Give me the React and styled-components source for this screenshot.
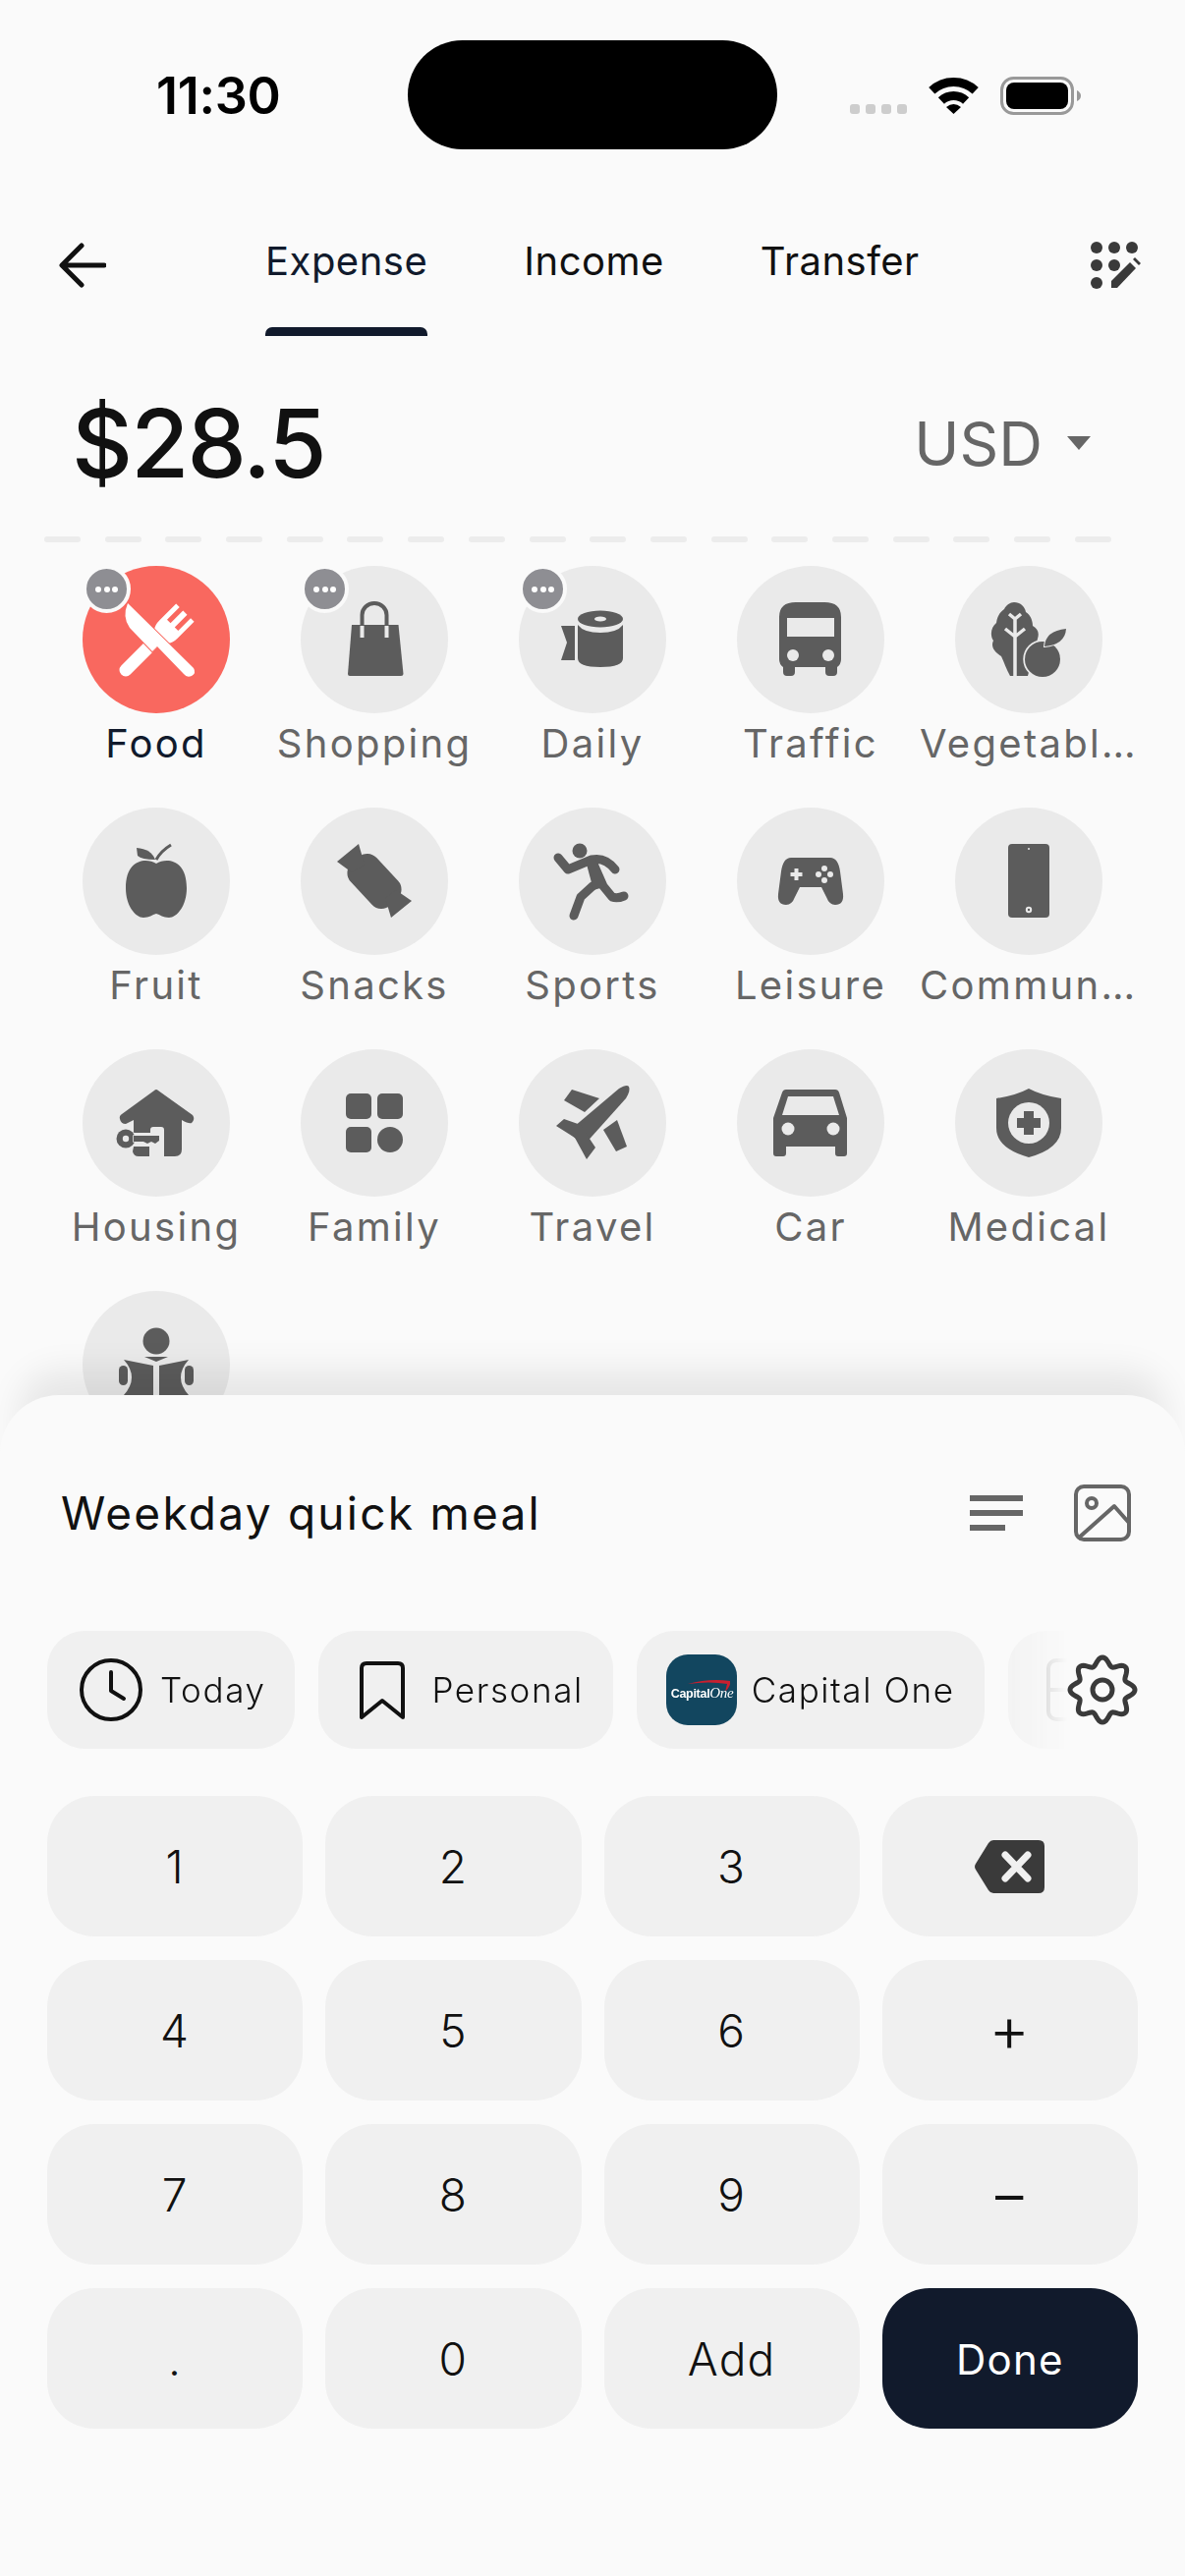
import React from 'react';
import styled, { createGlobalStyle } from 'styled-components';

const GlobalStyle = createGlobalStyle`
  html, body { margin: 0; padding: 0; background: #fafafa; }
  * { box-sizing: border-box; }
`;

const Page = styled.div`
  position: relative;
  width: 1206px;
  height: 2622px;
  overflow: hidden;
  background: #fafafa;
  font-family: Inter, "Liberation Sans", sans-serif;
  color: #111;
`;

const StatusBar = styled.div`
  display: flex;
  align-items: flex-start;
  height: 246px;
  padding: 41px 0 0 159px;
`;

const Time = styled.div`
  width: 256px;
  height: 111px;
  line-height: 114px;
  font-size: 52px;
  font-weight: 600;
  letter-spacing: -0.3px;
  color: #000;
`;

const Island = styled.div`
  width: 376px;
  height: 111px;
  border-radius: 56px;
  background: #000;
`;

const StatusIcons = styled.svg`
  margin: 37px 0 0 74px;
`;

const Header = styled.div`
  display: flex;
  align-items: flex-start;
  height: 96px;
  padding-left: 60px;
`;

const BackIcon = styled.svg`
  margin-top: 1px;
  flex: none;
`;

const Tabs = styled.div`
  display: flex;
  gap: 98px;
  margin-left: 162px;
  width: 792px;
`;

const Tab = styled.div`
  position: relative;
  height: 96px;
  line-height: 40px;
  font-size: 40px;
  font-weight: 380;
  letter-spacing: 0.5px;
  color: ${(p) => (p.$active ? '#111a2c' : '#111')};

  &::after {
    content: '';
    display: ${(p) => (p.$active ? 'block' : 'none')};
    position: absolute;
    left: 0;
    right: 0;
    bottom: 0;
    height: 9px;
    border-radius: 7px 7px 0 0;
    background: #111a2c;
  }
`;

const MagicIcon = styled.svg`
  flex: none;
  margin-left: 46px;
`;

const AmountRow = styled.div`
  display: flex;
  justify-content: space-between;
  align-items: center;
  height: 204px;
  padding: 14px 96px 0 73px;
`;

const Amount = styled.div`
  font-size: 96px;
  font-weight: 550;
  letter-spacing: -1.8px;
  color: #111;
`;

const Currency = styled.div`
  display: flex;
  align-items: center;
  gap: 25px;
  font-size: 62px;
  color: #666;
`;

const Caret = styled.span`
  width: 0;
  height: 0;
  border-left: 12px solid transparent;
  border-right: 12px solid transparent;
  border-top: 14px solid #666;
`;

const Dashes = styled.div`
  display: flex;
  gap: 24.7px;
  height: 6px;
  margin-left: 45px;
`;

const Dash = styled.span`
  width: 37px;
  height: 6px;
  border-radius: 3px;
  background: #ececec;
`;

const Grid = styled.div`
  display: grid;
  grid-template-columns: repeat(5, 222px);
  grid-auto-rows: 246px;
  margin-top: 24px;
  padding-left: 48px;
`;

const Category = styled.div`
  display: flex;
  flex-direction: column;
  align-items: center;
  min-width: 0;
`;

const Bubble = styled.div`
  position: relative;
  flex: none;
  width: 150px;
  height: 150px;
  border-radius: 50%;
  background: ${(p) => (p.$active ? '#f9685f' : '#eaeaea')};
  color: ${(p) => (p.$active ? '#fff' : '#5c5c5c')};
`;

const Badge = styled.div`
  position: absolute;
  top: -1px;
  left: 0;
  display: flex;
  align-items: center;
  justify-content: center;
  gap: 2.5px;
  width: 49px;
  height: 49px;
  border: 4px solid #fafafa;
  border-radius: 50%;
  background: #8e8e93;
`;

const BadgeDot = styled.span`
  width: 6px;
  height: 6px;
  border-radius: 50%;
  background: #fff;
`;

const Label = styled.div`
  flex: none;
  width: 222px;
  margin-top: 7px;
  overflow: hidden;
  white-space: nowrap;
  text-overflow: ellipsis;
  text-align: center;
  line-height: 48px;
  font-size: 40px;
  letter-spacing: 2.3px;
  color: ${(p) => (p.$active ? '#111a2c' : '#666')};
`;

const Sheet = styled.div`
  position: absolute;
  top: 1420px;
  left: 0;
  width: 1206px;
  height: 1104px;
  padding: 91px 48px 0;
  border-radius: 60px;
  background: #fafafa;
  box-shadow: 0 -45px 34px -20px rgba(0, 0, 0, 0.08);
`;

const NoteRow = styled.div`
  display: flex;
  align-items: center;
  height: 58px;
  padding: 0 7px 0 14px;
`;

const NoteText = styled.div`
  flex: 1;
  font-size: 46px;
  font-weight: 380;
  letter-spacing: 2.25px;
  color: #111;
`;

const NoteLines = styled.svg`
  margin-right: 52px;
`;

const ChipRow = styled.div`
  position: relative;
  margin-top: 91px;
  height: 120px;
`;

const ChipScroll = styled.div`
  display: flex;
  gap: 24px;
  width: 1038px;
  height: 120px;
  overflow: hidden;
  mask-image: linear-gradient(to right, #000 calc(100% - 84px), transparent);
`;

const Chip = styled.div`
  display: flex;
  flex: none;
  align-items: center;
  gap: ${(p) => p.$gap || 18}px;
  height: 120px;
  padding: 0 30px 0 ${(p) => p.$left || 33}px;
  border-radius: 38px;
  background: #f0f0f0;
  font-size: 35px;
  letter-spacing: 1.6px;
  font-weight: 300;
  color: #111;
`;

const BankLogo = styled.div`
  position: relative;
  width: 72px;
  height: 72px;
  border-radius: 22px;
  background: #12465f;
  overflow: hidden;
`;

const BankName = styled.span`
  position: absolute;
  top: 33px;
  left: 5px;
  white-space: nowrap;
  font-family: "Liberation Sans", sans-serif;
  font-size: 12.5px;
  font-weight: 700;
  letter-spacing: -0.3px;
  line-height: 13px;
  color: #fff;
`;

const BankOne = styled.span`
  font-family: "Liberation Serif", serif;
  font-style: italic;
  font-weight: 400;
  font-size: 15px;
`;

const BankSwoosh = styled.svg`
  position: absolute;
  top: 0;
  left: 0;
`;

const GearIcon = styled.svg`
  position: absolute;
  top: 24px;
  right: 0;
`;

const Keypad = styled.div`
  display: grid;
  grid-template-columns: repeat(4, 260.25px);
  grid-auto-rows: 143px;
  gap: 24px 23px;
  margin-top: 48px;
`;

const Key = styled.div`
  display: flex;
  align-items: center;
  justify-content: center;
  padding: ${(p) => (p.$op ? '0 0 5px' : '1px 0 0')};
  border-radius: 48px;
  background: ${(p) => (p.$primary ? '#111a2c' : '#f0f0f0')};
  color: ${(p) => (p.$primary ? '#fff' : '#111')};
  font-size: ${(p) => (p.$primary ? 42 : p.$op ? 64 : 46)}px;
  font-weight: ${(p) => (p.$primary ? 400 : 300)};
  letter-spacing: 1.2px;
`;

/* category icons share a 150x150 canvas, same as the bubble */
const Canvas = ({ children }) => (
  <svg width="150" height="150" viewBox="0 0 150 150" fill="currentColor" style={{ display: 'block' }}>
    {children}
  </svg>
);

const FoodIcon = () => (
  <Canvas>
    <path d="M44 106 L71 79" stroke="currentColor" strokeWidth="13" strokeLinecap="round" fill="none" />
    <g transform="translate(86 66) rotate(45)">
      <path d="M-13-26 L-8-26 L-8-8 L-3-8 L-3-26 L3-26 L3-8 L8-8 L8-26 L13-26 L13-2 Q13 12 0 12 Q-13 12 -13-2 Z" />
    </g>
    <path d="M46 38 L113 104 Q116 109 111 112 Q106 114 103 110 L76 82 L71 87 L48 63 Q40 52 46 38Z" stroke="#f9685f" strokeWidth="2" paintOrder="stroke" />
  </Canvas>
);

const ShoppingIcon = () => (
  <Canvas>
    <path d="M52 60 H99.5 L104.5 110 Q104.5 112 102 112 H50 Q48 112 48 110 Z" />
    <path d="M62.5 60 V50 a12.5 12 0 0 1 25 0 V60" fill="none" stroke="currentColor" strokeWidth="4" />
    <path d="M62.5 61 V73 M87.5 61 V73" fill="none" stroke="#eaeaea" strokeWidth="4" />
  </Canvas>
);

const DailyIcon = () => (
  <Canvas>
    <path d="M43 61 H57 V96 H43 L49 78 Z" />
    <ellipse cx="83" cy="54" rx="23" ry="8.5" />
    <ellipse cx="83" cy="54" rx="6" ry="2.6" fill="#eaeaea" />
    <path d="M60 60 Q66 68 83 68 Q100 68 106 60 V94 Q106 103 83 103 Q60 103 60 94Z" />
  </Canvas>
);

const TrafficIcon = () => (
  <Canvas>
    <path d="M43 52 Q43 37 60 37 H89 Q106 37 106 52 V95 Q106 100 102 103 V108 Q102 112 98 112 H94 Q90 112 90 108 V103 H59 V108 Q59 112 55 112 H51 Q47 112 47 108 V103 Q43 100 43 95 Z" />
    <rect x="51" y="53" width="48" height="19" fill="#eaeaea" />
    <circle cx="57" cy="91" r="6" fill="#eaeaea" />
    <circle cx="93" cy="91" r="6" fill="#eaeaea" />
  </Canvas>
);

const VegetableIcon = () => (
  <Canvas>
    <path d="M60 37 C66 37 71 41 72 47 C77 50 79 56 79 61 C84 64 86 68 84 74 L74 112 H56 C52 105 50 98 47 92 C40 88 36 82 39 76 C35 70 37 62 42 58 C43 50 47 46 50 44 C52 40 56 37 60 37Z" />
    <path d="M61 112 V54 M61 72 L51 64 M61 72 L71 64 M61 54 L55 49 M61 54 L67 49" fill="none" stroke="#eaeaea" strokeWidth="3.5" />
    <circle cx="89" cy="95" r="18" stroke="#eaeaea" strokeWidth="3.5" paintOrder="stroke" />
    <path d="M91 82 Q92 66 113 64 Q112 80 91 82Z" stroke="#eaeaea" strokeWidth="2" paintOrder="stroke" />
  </Canvas>
);

const FruitIcon = () => (
  <Canvas>
    <path d="M75 57 C85 51 106 52 106 82 C106 100 96 112 88 112 C82 112 79 109 75 108 C71 109 68 112 62 112 C54 112 44 100 44 82 C44 52 65 51 75 57Z" />
    <path d="M55 41 Q70 42 74 53 Q60 53 56 49Z" />
    <path d="M75 53 Q80 44 90 38" fill="none" stroke="currentColor" strokeWidth="3" />
  </Canvas>
);

const SnacksIcon = () => (
  <Canvas>
    <rect x="46" y="57" width="58" height="36" rx="13" transform="rotate(47 75 75)" />
    <path d="M37 55 L59 37 L65 58 L52 66 Z" />
    <path d="M113 95 L92 112 L86 92 L97 84 Z" />
  </Canvas>
);

const SportsIcon = () => (
  <Canvas>
    <circle cx="62" cy="44" r="7.5" />
    <path d="M40 51 L50 63 L74 53 Q88 50 98 63 M75 55 L86 80 L95 91 Q100 93 107 90 M75 80 L63 91 L56 110" fill="none" stroke="currentColor" strokeWidth="9" strokeLinecap="round" strokeLinejoin="round" />
    <path d="M68 54 L78 52 L90 80 L76 84 Z" />
  </Canvas>
);

const LeisureIcon = () => (
  <Canvas>
    <path d="M55 51 H95 Q103 51 105 65 L108 88 Q109 99 100 99 Q94 99 91 91 L86 81 H64 L59 91 Q56 99 50 99 Q41 99 42 88 L45 65 Q47 51 55 51Z" />
    <path d="M60.5 62 V74 M54.5 68 H66.5" stroke="#eaeaea" strokeWidth="4" />
    <circle cx="89" cy="62" r="3" fill="#eaeaea" />
    <circle cx="89" cy="74" r="3" fill="#eaeaea" />
    <circle cx="83" cy="68" r="3" fill="#eaeaea" />
    <circle cx="95" cy="68" r="3" fill="#eaeaea" />
  </Canvas>
);

const PhoneIcon = () => (
  <Canvas>
    <rect x="54" y="37" width="42" height="75" rx="4" />
    <circle cx="75" cy="42" r="1" fill="#eaeaea" />
    <circle cx="75" cy="104" r="3.2" fill="#eaeaea" />
    <circle cx="75" cy="104" r="1.2" />
  </Canvas>
);

const HousingIcon = () => (
  <Canvas>
    <path d="M73 42 Q75 40 77 42 L112 67 Q115 71 111 75 Q108 76 101 72 V102 Q101 109 94 109 H83 V82 Q83 79 80 79 H72 Q69 79 69 82 V85 L52 85 V72 L44 76 Q39 76 38 71 Q37 68 40 66 Z" />
    <path d="M52 99 H68 V109 H57 Q52 109 51 104 Z" />
    <circle cx="44" cy="91" r="9.5" stroke="#eaeaea" strokeWidth="2" paintOrder="stroke" />
    <circle cx="44" cy="91" r="3.2" fill="#eaeaea" />
    <path d="M52 88 H78 V93 L74 96 L70 94 L66 96 L62 94 H52 Z" stroke="#eaeaea" strokeWidth="1.5" paintOrder="stroke" />
  </Canvas>
);

const FamilyIcon = () => (
  <Canvas>
    <rect x="46" y="45" width="26" height="26" rx="5" />
    <rect x="78" y="45" width="26" height="26" rx="5" />
    <rect x="46" y="79" width="26" height="26" rx="5" />
    <circle cx="91" cy="92" r="13" />
  </Canvas>
);

const TravelIcon = () => (
  <Canvas>
    <path d="M102 40 Q110 35 112 38 Q114 42 109 50 L66 98 L50 84 Z" />
    <path d="M54 41 L82 50 L67 64 L46 52 Z" />
    <path d="M100 72 L110 99 L99 104 L86 82 Z" />
    <path d="M38 78 L46 71 L63 77 L70 88 L78 100 L69 112 L57 90 Z" />
  </Canvas>
);

const CarIcon = () => (
  <Canvas>
    <path d="M50 41 H100 Q103 41 104 44 L112 70 V106 Q112 109 109 109 H103 Q100 109 100 106 V99 H50 V106 Q50 109 47 109 H40 Q37 109 37 106 V70 L46 44 Q47 41 50 41Z" />
    <path d="M52 48 H98 L104 67 H46 Z" fill="#eaeaea" />
    <circle cx="52" cy="81" r="6.5" fill="#eaeaea" />
    <circle cx="98" cy="81" r="6.5" fill="#eaeaea" />
  </Canvas>
);

const MedicalIcon = () => (
  <Canvas>
    <path d="M75 40 Q88 47 108 50 V80 Q108 101 75 110 Q42 101 42 80 V50 Q62 47 75 40Z" />
    <circle cx="75" cy="75" r="21" fill="#eaeaea" />
    <path d="M70 63 H80 V70 H87 V80 H80 V87 H70 V80 H63 V70 H70 Z" />
  </Canvas>
);

const ReadingIcon = () => (
  <Canvas>
    <circle cx="75" cy="51" r="13.5" />
    <path d="M63 67 H87 L75 72 Z" />
    <path d="M42 70 L72 76 V106 H42 Q58 88 42 70Z" />
    <path d="M108 70 L78 76 V106 H108 Q92 88 108 70Z" />
    <rect x="37" y="76" width="9" height="20" rx="4.5" />
    <rect x="104" y="76" width="9" height="20" rx="4.5" />
  </Canvas>
);

// the last row runs under the sheet, its label is never visible
const CATEGORIES = [
  { id: 'food', name: 'Food', Icon: FoodIcon, active: true, badge: true },
  { id: 'shopping', name: 'Shopping', Icon: ShoppingIcon, badge: true },
  { id: 'daily', name: 'Daily', Icon: DailyIcon, badge: true },
  { id: 'traffic', name: 'Traffic', Icon: TrafficIcon },
  { id: 'vegetables', name: 'Vegetables', Icon: VegetableIcon },
  { id: 'fruit', name: 'Fruit', Icon: FruitIcon },
  { id: 'snacks', name: 'Snacks', Icon: SnacksIcon },
  { id: 'sports', name: 'Sports', Icon: SportsIcon },
  { id: 'leisure', name: 'Leisure', Icon: LeisureIcon },
  { id: 'communication', name: 'Communication', Icon: PhoneIcon },
  { id: 'housing', name: 'Housing', Icon: HousingIcon },
  { id: 'family', name: 'Family', Icon: FamilyIcon },
  { id: 'travel', name: 'Travel', Icon: TravelIcon },
  { id: 'car', name: 'Car', Icon: CarIcon },
  { id: 'medical', name: 'Medical', Icon: MedicalIcon },
  { id: 'reading', Icon: ReadingIcon },
];

const KEYS = ['1', '2', '3', 'back', '4', '5', '6', '+', '7', '8', '9', '−', '.', '0', 'Add', 'Done'];

// scalloped outline of the settings cog, 8 lobes
const gearPath = () => {
  const pts = [];
  for (let i = 0; i < 160; i += 1) {
    const a = (i / 160) * Math.PI * 2;
    const r = 29 + 4 * Math.cos(8 * a);
    pts.push(`${(36 + r * Math.sin(a)).toFixed(2)} ${(36 - r * Math.cos(a)).toFixed(2)}`);
  }
  return `M${pts.join(' L')}Z`;
};

const StatusGlyphs = () => (
  <StatusIcons width="235" height="39" viewBox="0 0 235 39">
    <g fill="#cdcdcd">
      <rect x="0" y="28" width="10" height="10" rx="3" />
      <rect x="16" y="28" width="10" height="10" rx="3" />
      <rect x="32" y="28" width="10" height="10" rx="3" />
      <rect x="48" y="28" width="10" height="10" rx="3" />
    </g>
    <g transform="translate(80 1)">
      <path d="M3.3 13.2 A32.5 32.5 0 0 1 47.7 13.2" fill="none" stroke="#000" strokeWidth="9" />
      <path d="M12.9 23.5 A18.5 18.5 0 0 1 38.1 23.5" fill="none" stroke="#000" strokeWidth="9" />
      <path d="M25.5 37 L18 30 Q25.5 24 33 30 Z" />
    </g>
    <rect x="154.5" y="1.5" width="72" height="36" rx="12" fill="none" stroke="#999" strokeWidth="3" />
    <rect x="159" y="6" width="63" height="27" rx="8" />
    <path d="M231 14 Q235 16 235 19.5 Q235 23 231 25 Z" fill="#999" />
  </StatusIcons>
);

const App = () => (
  <Page>
    <GlobalStyle />
    <StatusBar>
      <Time>11:30</Time>
      <Island />
      <StatusGlyphs />
    </StatusBar>

    <Header>
      <BackIcon width="48" height="46" viewBox="0 0 48 46" fill="none" stroke="#111" strokeWidth="5" strokeLinecap="round" strokeLinejoin="round">
        <path d="M46 23 H4 M23 3 L3 23 L23 43" />
      </BackIcon>
      <Tabs>
        <Tab $active>Expense</Tab>
        <Tab>Income</Tab>
        <Tab>Transfer</Tab>
      </Tabs>
      <MagicIcon width="54" height="50" viewBox="0 0 54 50" fill="#3a3a3a">
        <circle cx="8" cy="6" r="6" />
        <circle cx="26" cy="6" r="6" />
        <circle cx="44" cy="6" r="6" />
        <circle cx="8" cy="24" r="6" />
        <circle cx="26" cy="24" r="6" />
        <circle cx="8" cy="42" r="6" />
        <path d="M23 47 L23 40 L42 21 L48 27 L29 47 Z" strokeLinejoin="round" />
        <path d="M45 18 L47 16 L53 22 L51 24 Z" />
      </MagicIcon>
    </Header>

    <AmountRow>
      <Amount>$28.5</Amount>
      <Currency>
        USD
        <Caret />
      </Currency>
    </AmountRow>

    <Dashes>
      {Array.from({ length: 18 }, (_, i) => <Dash key={i} />)}
    </Dashes>

    <Grid>
      {CATEGORIES.map(({ id, name, Icon, active, badge }) => (
        <Category key={id}>
          <Bubble $active={active}>
            <Icon />
            {badge && (
              <Badge>
                <BadgeDot />
                <BadgeDot />
                <BadgeDot />
              </Badge>
            )}
          </Bubble>
          {name && <Label $active={active}>{name}</Label>}
        </Category>
      ))}
    </Grid>

    <Sheet>
      <NoteRow>
        <NoteText>Weekday quick meal</NoteText>
        <NoteLines width="54" height="36" viewBox="0 0 54 36" fill="#666">
          <rect width="54" height="6" />
          <rect y="15" width="54" height="6" />
          <rect y="30" width="36" height="6" />
        </NoteLines>
        <svg width="58" height="58" viewBox="0 0 58 58" fill="none" stroke="#666" strokeWidth="4" strokeLinejoin="round">
          <rect x="2" y="2" width="54" height="54" rx="8" />
          <circle cx="18" cy="19" r="5" />
          <path d="M4 55 L41 22 L56 39" />
        </svg>
      </NoteRow>

      <ChipRow>
        <ChipScroll>
          <Chip>
            <svg width="64" height="64" viewBox="0 0 64 64" fill="none" stroke="#111" strokeWidth="4" strokeLinecap="round" strokeLinejoin="round">
              <circle cx="32" cy="32" r="30" />
              <path d="M32 14 V33 L45 41" />
            </svg>
            Today
          </Chip>
          <Chip>
            <svg width="64" height="64" viewBox="0 0 64 64" fill="none" stroke="#111" strokeWidth="4" strokeLinejoin="round">
              <path d="M11 60 V10 Q11 5 16 5 H48 Q53 5 53 10 V60 L32 43 Z" />
            </svg>
            Personal
          </Chip>
          <Chip $left={30} $gap={15}>
            <BankLogo>
              <BankSwoosh width="72" height="72" viewBox="0 0 72 72">
                <path d="M22 30 Q44 24 65 27 Q66 32 60 38 L62 30 Q44 27 22 30Z" fill="#c8202f" />
                <path d="M38 51 L56 42 L40 50Z" fill="#c8202f" />
              </BankSwoosh>
              <BankName>Capital<BankOne>One</BankOne></BankName>
            </BankLogo>
            Capital One
          </Chip>
          <Chip>
            <svg width="64" height="64" viewBox="0 0 64 64" fill="none" stroke="#999" strokeWidth="4">
              <rect x="8" y="2" width="54" height="60" rx="8" />
              <path d="M8 32 H62" />
            </svg>
          </Chip>
        </ChipScroll>
        <GearIcon width="72" height="72" viewBox="0 0 72 72" fill="none" stroke="#3a3a3a" strokeWidth="5">
          <path d={gearPath()} />
          <circle cx="36" cy="36" r="10" />
        </GearIcon>
      </ChipRow>

      <Keypad>
        {KEYS.map((k) => (
          <Key key={k} $primary={k === 'Done'} $op={k === '+' || k === '−'}>
            {k === 'back' ? (
              <svg width="71" height="54" viewBox="0 0 71 54">
                <path d="M19 0 H65 Q71 0 71 6 V48 Q71 54 65 54 H19 Q16 54 14 51 L1 30 Q-1 27 1 24 L14 3 Q16 0 19 0Z" fill="#3a3a3a" />
                <path d="M31 15 L54 39 M54 15 L31 39" stroke="#f0f0f0" strokeWidth="7" strokeLinecap="round" />
              </svg>
            ) : k}
          </Key>
        ))}
      </Keypad>
    </Sheet>
  </Page>
);

export default App;
